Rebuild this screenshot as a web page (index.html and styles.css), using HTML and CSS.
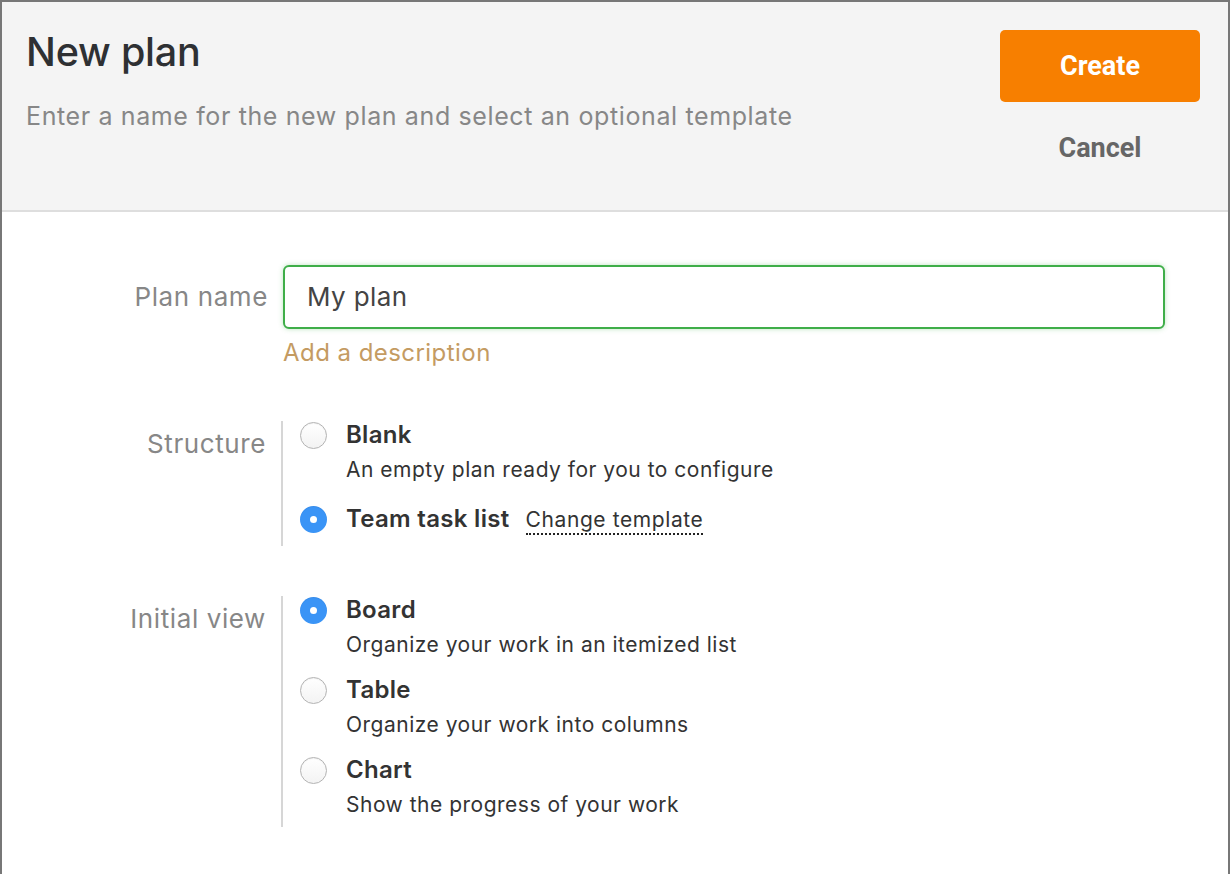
FILE: index.html
```html
<!DOCTYPE html>
<html>
<head>
<meta charset="utf-8">
<link rel="stylesheet" href="styles.css">
</head>
<body>
<div class="window">
  <header class="head">
    <div class="head-text">
      <h1 class="title">New plan</h1>
      <p class="subtitle">Enter a name for the new plan and select an optional template</p>
    </div>
    <div class="head-actions">
      <button class="btn-create">Create</button>
      <button class="btn-cancel">Cancel</button>
    </div>
  </header>
  <main class="form">
    <div class="row row-name">
      <label class="label label-name">Plan name</label>
      <div class="field">
        <div class="input">My plan</div>
        <a class="add-desc">Add a description</a>
      </div>
    </div>
    <div class="row row-group">
      <div class="label label-group">Structure</div>
      <div class="group group-structure">
        <div class="option">
          <span class="radio"></span>
          <div class="opt-text">
            <div class="opt-title">Blank</div>
            <div class="opt-desc">An empty plan ready for you to configure</div>
          </div>
        </div>
        <div class="option">
          <span class="radio checked"></span>
          <div class="opt-text">
            <div class="opt-title">Team task list<span class="change">Change template</span></div>
          </div>
        </div>
      </div>
    </div>
    <div class="row row-group row-view">
      <div class="label label-group">Initial view</div>
      <div class="group group-view">
        <div class="option">
          <span class="radio checked"></span>
          <div class="opt-text">
            <div class="opt-title">Board</div>
            <div class="opt-desc">Organize your work in an itemized list</div>
          </div>
        </div>
        <div class="option">
          <span class="radio"></span>
          <div class="opt-text">
            <div class="opt-title">Table</div>
            <div class="opt-desc">Organize your work into columns</div>
          </div>
        </div>
        <div class="option">
          <span class="radio"></span>
          <div class="opt-text">
            <div class="opt-title">Chart</div>
            <div class="opt-desc">Show the progress of your work</div>
          </div>
        </div>
      </div>
    </div>
  </main>
</div>
</body>
</html>
```

FILE: styles.css
```css
html, body {
  margin: 0;
  padding: 0;
  background: #ffffff;
}
body {
  font-family: Inter, "Liberation Sans", sans-serif;
  color: #333;
}
.window {
  box-sizing: border-box;
  width: 1230px;
  height: 874px;
  border: 2px solid #777;
  border-bottom: none;
  background: #fff;
  overflow: hidden;
}
.head {
  box-sizing: border-box;
  height: 210px;
  background: #f4f4f4;
  border-bottom: 2px solid #dedede;
  display: flex;
  justify-content: space-between;
  padding: 28px 28px 0 24px;
}
.title {
  margin: 0;
  font-size: 39.5px;
  line-height: 44px;
  font-weight: 500;
  color: #2e3033;
  letter-spacing: -0.2px;
}
.subtitle {
  margin: 27px 0 0;
  font-size: 25px;
  line-height: 30px;
  letter-spacing: 0.62px;
  color: #878787;
}
.head-actions {
  display: flex;
  flex-direction: column;
  align-items: center;
}
.btn-create {
  width: 200px;
  height: 72px;
  border: none;
  border-radius: 5px;
  background: #f77f00;
  color: #fff;
  font-family: Roboto, "Liberation Sans", sans-serif;
  font-weight: 700;
  font-size: 27px;
  padding: 0;
}
.btn-cancel {
  margin-top: 30px;
  border: none;
  background: none;
  padding: 0;
  color: #666;
  font-family: Roboto, "Liberation Sans", sans-serif;
  font-weight: 700;
  font-size: 27px;
  line-height: 32px;
}
.form {
  padding-top: 53px;
}
.row {
  display: grid;
  grid-template-columns: 264px 1fr;
  column-gap: 15px;
}
.label {
  text-align: right;
  font-size: 26px;
  letter-spacing: 0.6px;
  color: #878787;
  white-space: nowrap;
}
.label-name {
  line-height: 64px;
  margin-right: -2px;
}
.field {
  padding-left: 2px;
  padding-right: 63px;
}
.input {
  box-sizing: border-box;
  height: 64px;
  border: 2px solid #3fae49;
  border-radius: 6px;
  box-shadow: 0 0 5px rgba(63, 174, 73, 0.35);
  background: #fff;
  padding: 0 22px;
  font-size: 26px;
  letter-spacing: 0.4px;
  line-height: 60px;
  color: #444;
}
.add-desc {
  display: block;
  margin-top: 9px;
  font-size: 24px;
  letter-spacing: 0.45px;
  line-height: 30px;
  color: #c49b62;
}
.row-group {
  margin-top: 53px;
}
.row-view {
  margin-top: 50px;
}
.label-group {
  padding-top: 8px;
  line-height: 30px;
}
.group {
  border-left: 2px solid #d6d6d6;
  padding: 0 0 8px 17px;
  display: flex;
  flex-direction: column;
}
.group-structure {
  gap: 21px;
  padding-bottom: 12px;
}
.group-view {
  gap: 17px;
  padding-bottom: 8px;
}
.option {
  display: flex;
  align-items: flex-start;
}
.radio {
  box-sizing: border-box;
  flex: none;
  width: 27px;
  height: 27px;
  margin-top: 1px;
  border-radius: 50%;
  border: 1px solid #b3b3b3;
  background: linear-gradient(#ffffff, #f3f3f3);
  box-shadow: inset 0 1px 1px rgba(0,0,0,0.05);
  margin-right: 19px;
  position: relative;
}
.radio.checked {
  border: none;
  background: #3a94f6;
}
.radio.checked::after {
  content: "";
  position: absolute;
  left: 10px;
  top: 10px;
  width: 7px;
  height: 7px;
  border-radius: 50%;
  background: #fff;
}
.opt-title {
  font-size: 24px;
  line-height: 28px;
  letter-spacing: 0.3px;
  font-weight: 600;
  color: #333;
}
.opt-desc {
  margin-top: 7px;
  font-size: 21px;
  line-height: 28px;
  letter-spacing: 0.5px;
  color: #333;
}
.change {
  margin-left: 16px;
  font-size: 21px;
  letter-spacing: 0.6px;
  font-weight: 400;
  color: #333;
  border-bottom: 2px dotted #222;
  padding-bottom: 1px;
}
```
